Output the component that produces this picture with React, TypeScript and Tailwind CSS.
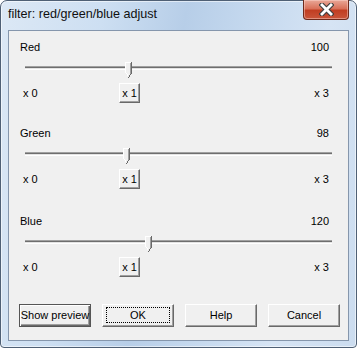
import React from "react";

const FONT = "font-['Liberation_Sans',Arial,sans-serif]";

function Thumb({ left }: { left: number }) {
  return (
    <svg
      width="7"
      height="16"
      viewBox="0 0 7 16"
      className="absolute top-[2px]"
      style={{ left }}
      shapeRendering="crispEdges"
    >
      <path d="M0 0 H7 V11 L3.5 15.5 L0 11 Z" fill="#f0f0f0" shapeRendering="auto" />
      <rect x="0" y="0" width="6" height="1" fill="#ffffff" />
      <rect x="0" y="0" width="1" height="11" fill="#ffffff" />
      <rect x="6" y="0" width="1" height="12" fill="#696969" />
      <rect x="5" y="1" width="1" height="11" fill="#a0a0a0" />
      <rect x="1" y="11" width="1" height="1" fill="#ffffff" />
      <rect x="2" y="12" width="1" height="2" fill="#ffffff" />
      <rect x="5" y="12" width="1" height="1" fill="#696969" />
      <rect x="4" y="13" width="1" height="2" fill="#696969" />
      <rect x="3" y="15" width="1" height="1" fill="#696969" />
    </svg>
  );
}

function WinButton({
  children,
  className = "",
  focused = false,
  strong = false,
}: {
  children: React.ReactNode;
  className?: string;
  focused?: boolean;
  strong?: boolean;
}) {
  return (
    <div
      className={
        "relative flex items-center justify-center bg-[#f0f0f0] text-[11px] leading-[13px] text-black " +
        (strong
          ? "border border-[#555555] shadow-[inset_1px_1px_0_#ffffff,inset_-1px_-1px_0_#696969,inset_-2px_-2px_0_#a0a0a0] "
          : "border-t border-l border-t-white border-l-white border-b border-r border-b-[#696969] border-r-[#696969] shadow-[inset_-1px_-1px_0_#a0a0a0] ") +
        className
      }
    >
      {focused && (
        <span className="absolute left-[3px] top-[2px] right-[3px] bottom-[3px] border border-dotted border-black" />
      )}
      <span className="relative">{children}</span>
    </div>
  );
}

function Section({
  label,
  value,
  className = "",
}: {
  label: string;
  value: number;
  className?: string;
}) {
  return (
    <div className={"flex flex-col " + className}>
      <div className="flex justify-between pl-[11px] pr-[19px] text-[11px] leading-[13px]">
        <span>{label}</span>
        <span>{value}</span>
      </div>
      <div className="relative mt-[6px] h-[20px] mx-[16px]">
        <div className="absolute left-0 right-0 top-[6px] h-[4px] border-t border-t-[#a0a0a0] border-b border-b-white bg-[linear-gradient(#6e6e6e_50%,#e3e3e3_50%)]" />
        <Thumb left={value} />
      </div>
      <div className="mt-[3px] flex items-center text-[11px] leading-[13px]">
        <div className="w-[110px] pl-[14px]">x 0</div>
        <WinButton className="w-[21px] h-[20px]">x 1</WinButton>
        <div className="flex-1 text-right pr-[19px]">x 3</div>
      </div>
    </div>
  );
}

export default function App() {
  return (
    <div className={"w-[357px] h-[348px] " + FONT}>
      <div className="relative flex flex-col w-[357px] h-[348px] rounded-t-[7px] rounded-b-[4px] border border-[#4f6075] shadow-[inset_0_0_0_1px_rgba(255,255,255,0.55)] bg-[linear-gradient(100deg,#dce8f5_0%,#cddff2_25%,#b7cee8_45%,#c4d8ee_60%,#d6e4f4_80%,#cbdcef_100%)]">
        <div className="h-[29px] flex items-center pl-[7px] pb-[2px] text-[12.6px] text-[#101010]">
          filter: red/green/blue adjust
        </div>
        <div className="absolute top-[-1px] right-[7px] w-[46px] h-[20px] rounded-b-[4px] border border-[#6e2a1c] border-t-0 bg-[linear-gradient(#e9a898_0%,#d9715a_45%,#c13e22_55%,#c9553a_100%)] shadow-[inset_0_0_0_1px_rgba(255,220,210,0.45)] flex items-center justify-center">
          <svg width="15" height="13" viewBox="0 0 15 13">
            <path d="M3 2 L12 11 M12 2 L3 11" stroke="#3d3d3d" strokeWidth="5" strokeLinecap="square" />
            <path d="M3 2 L12 11 M12 2 L3 11" stroke="#ffffff" strokeWidth="2.8" strokeLinecap="square" />
          </svg>
        </div>
        <div className="flex-1 mx-[7px] mb-[6px] border border-[#8596ac] bg-[#f0f0f0] text-black flex flex-col">
          <Section label="Red" value={100} className="pt-[10px]" />
          <Section label="Green" value={98} className="mt-[24px]" />
          <Section label="Blue" value={120} className="mt-[26px]" />
          <div className="mt-[27px] flex gap-[11px] pl-[10px]">
            <WinButton strong className="w-[72px] h-[23px]">Show preview</WinButton>
            <WinButton focused className="w-[72px] h-[23px]">OK</WinButton>
            <WinButton className="w-[72px] h-[23px]">Help</WinButton>
            <WinButton className="w-[72px] h-[23px]">Cancel</WinButton>
          </div>
        </div>
      </div>
    </div>
  );
}
